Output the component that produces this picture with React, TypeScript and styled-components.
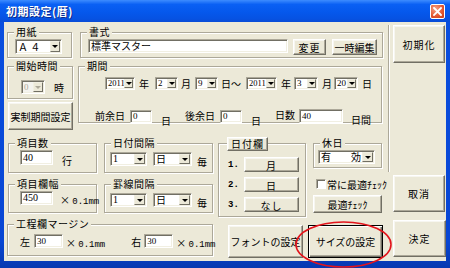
import React from "react";
import styled, { createGlobalStyle, css } from "styled-components";

const GlobalStyle = createGlobalStyle`
  html, body { margin: 0; padding: 0; background: #ffffff; }
  body {
    font-family: "Noto Sans CJK JP", "Noto Sans", sans-serif;
    font-size: 10px;
    color: #000;
  }
  *, *::before, *::after { box-sizing: border-box; }
`;

type Box = { $w?: number; $h?: number; $mt?: number; $ml?: number; $col?: string; $row?: string };

const boxCss = css<Box>`
  ${(p) => (p.$w !== undefined ? `width: ${p.$w}px;` : "")}
  ${(p) => (p.$h !== undefined ? `height: ${p.$h}px;` : "")}
  margin-top: ${(p) => p.$mt ?? 0}px;
  margin-left: ${(p) => p.$ml ?? 0}px;
  ${(p) => (p.$col ? `grid-column: ${p.$col};` : "")}
  ${(p) => (p.$row ? `grid-row: ${p.$row};` : "")}
  flex-shrink: 0;
`;

const Window = styled.div`
  position: relative;
  width: 450px;
  height: 268px;
  display: flex;
  flex-direction: column;
  background: linear-gradient(180deg, #0a4fe0 0%, #0846d4 90%, #0638b0 100%);
  overflow: hidden;
`;

const TitleBar = styled.div`
  height: 22px;
  flex-shrink: 0;
  display: flex;
  align-items: center;
  justify-content: space-between;
  padding: 0 5px 0 6px;
  background: linear-gradient(180deg, #3d8cff 0%, #0a60f4 20%, #0558ec 55%, #0652e2 85%, #0a4cd6 100%);
`;

const Title = styled.span`
  color: #fff;
  font-weight: bold;
  font-size: 11px;
  letter-spacing: 0.5px;
  text-shadow: 1px 1px 0 #0c2a8a;
`;

const CloseBtn = styled.div`
  width: 15px;
  height: 15px;
  border: 1px solid #fff;
  border-radius: 2px;
  background: radial-gradient(circle at 35% 30%, #f6a286, #e2552e 60%, #c63f1c);
  display: flex;
  align-items: center;
  justify-content: center;
`;

const Frame = styled.div`
  flex: 1;
  margin: 0 4px 7px 4px;
  background: #ece9d8;
  display: flex;
  padding: 3px 0 0 3px;
`;

const Main = styled.div`
  width: 376px;
  flex-shrink: 0;
  display: flex;
  flex-direction: column;
`;

const TopSection = styled.div`
  display: flex;
  height: 105px;
`;

const Column = styled.div<Box>`
  ${boxCss};
  display: flex;
  flex-direction: column;
`;

const BottomGrid = styled.div`
  margin-top: 7px;
  display: grid;
  grid-template-columns: 97px 114px 95px 70px;
  grid-template-rows: 36px 44px 44px;
`;

const Cell = styled.div<Box>`
  ${boxCss};
  display: flex;
  flex-direction: column;
  min-width: 0;
`;

const Group = styled.div<Box>`
  ${boxCss};
  align-self: start;
  border: 1px solid #aca899;
  box-shadow: inset 1px 1px 0 #fff, 1px 1px 0 #fff;
  display: flex;
  flex-direction: column;
`;

const Legend = styled.span`
  align-self: flex-start;
  height: 14px;
  line-height: 14px;
  margin: -8px 0 -6px 6px;
  padding: 0 2px;
  background: #ece9d8;
  letter-spacing: 0.5px;
  white-space: nowrap;
`;

const Row = styled.div<{ $pt?: number; $pl?: number }>`
  display: flex;
  align-items: flex-start;
  padding: ${(p) => p.$pt ?? 0}px 0 0 ${(p) => p.$pl ?? 0}px;
`;

const Txt = styled.span<Box & { $lh?: number }>`
  ${boxCss};
  line-height: ${(p) => p.$lh ?? 13}px;
  white-space: nowrap;
`;

const Field = styled.div<Box & { $disabled?: boolean }>`
  ${boxCss};
  display: flex;
  align-items: stretch;
  background: ${(p) => (p.$disabled ? "#f4f3ee" : "#fff")};
  border: 1px solid;
  border-color: #aca899 #fff #fff #aca899;
  box-shadow: inset 1px 1px 0 #716f64, inset -1px -1px 0 #f1efe2;
  padding: 1px 1px 1px 2px;
  color: ${(p) => (p.$disabled ? "#aca899" : "#000")};
`;

const Value = styled.span<{ $serif?: boolean; $fs?: number }>`
  flex: 1;
  min-width: 0;
  white-space: nowrap;
  display: flex;
  align-items: center;
  line-height: 1;
  font-family: ${(p) => (p.$serif ? `"Liberation Serif", serif` : "inherit")};
  font-size: ${(p) => p.$fs ?? 10}px;
`;

const Drop = styled.span<{ $w?: number; $disabled?: boolean }>`
  width: ${(p) => p.$w ?? 10}px;
  flex-shrink: 0;
  background: #ece9d8;
  border: 1px solid;
  border-color: #f1efe2 #716f64 #716f64 #f1efe2;
  display: flex;
  align-items: center;
  justify-content: center;
  &::after {
    content: "";
    border-left: 3px solid transparent;
    border-right: 3px solid transparent;
    border-top: 3px solid ${(p) => (p.$disabled ? "#aca899" : "#000")};
  }
`;

const Btn = styled.button<Box & { $default?: boolean; $ls?: number }>`
  ${boxCss};
  padding: 0;
  font-family: inherit;
  font-size: 10px;
  color: #000;
  letter-spacing: ${(p) => p.$ls ?? 1}px;
  background: #ece9d8;
  border: 1px solid;
  border-color: #fff #716f64 #716f64 #fff;
  box-shadow: inset -1px -1px 0 #aca899, inset 1px 1px 0 #f7f6f0;
  white-space: nowrap;
  overflow: visible;
  ${(p) =>
    p.$default &&
    css`
      border-color: #000;
      box-shadow: inset 1px 1px 0 #fff, inset -1px -1px 0 #716f64, inset -2px -2px 0 #aca899;
    `}
`;

const LegendBtn = styled(Btn)`
  align-self: flex-start;
  margin-top: -7px;
  margin-bottom: -7px;
  line-height: 12px;
`;

const DateList = styled.div`
  display: flex;
  flex-direction: column;
  gap: 5px;
  padding: 13px 0 0 9px;
`;

const DateRow = styled.div`
  display: flex;
  align-items: center;
`;

const Num = styled.span`
  width: 12px;
  font-family: "Liberation Mono", monospace;
  font-weight: bold;
  font-size: 9px;
`;

const CheckRow = styled.div`
  margin: 4px 0 0 3px;
  width: 74px;
  height: 14px;
  overflow: hidden;
  display: flex;
  align-items: center;
  white-space: nowrap;
`;

const CheckBox = styled.span`
  width: 10px;
  height: 10px;
  flex-shrink: 0;
  margin-right: 1px;
  background: #fff;
  border: 1px solid;
  border-color: #aca899 #fff #fff #aca899;
  box-shadow: inset 1px 1px 0 #716f64;
`;

const MmNum = styled.span`
  font-family: "Liberation Mono", monospace;
  font-size: 9px;
`;

const ButtonRow = styled.div<Box>`
  ${boxCss};
  display: flex;
`;

const RightCol = styled.div`
  width: 63px;
  flex-shrink: 0;
  display: flex;
  flex-direction: column;
`;

const SidePane = styled.div`
  margin-left: 5px;
  height: 147px;
  border-left: 1px solid #aca899;
  box-shadow: inset 1px 0 0 #fff;
  padding-left: 4px;
`;

const Annotation = styled.svg`
  position: absolute;
  left: 295px;
  top: 221px;
  overflow: visible;
  pointer-events: none;
`;

const Combo = ({
  w,
  h = 13,
  text,
  serif,
  fs,
  dw,
  disabled,
  ml,
}: {
  w: number;
  h?: number;
  text: string;
  serif?: boolean;
  fs?: number;
  dw?: number;
  disabled?: boolean;
  ml?: number;
}) => (
  <Field $w={w} $h={h} $ml={ml} $disabled={disabled}>
    <Value $serif={serif} $fs={fs}>{text}</Value>
    <Drop $w={dw} $disabled={disabled} />
  </Field>
);

const Mm = ({ ml, mt }: { ml: number; mt: number }) => (
  <Txt $ml={ml} $mt={mt}>
    × <MmNum>0.1mm</MmNum>
  </Txt>
);

export default function App() {
  return (
    <>
      <GlobalStyle />
      <Window>
        <TitleBar>
          <Title>初期設定(暦)</Title>
          <CloseBtn>
            <svg width="9" height="9" viewBox="0 0 9 9">
              <path d="M1 1 L8 8 M8 1 L1 8" stroke="#fff" strokeWidth="1.8" strokeLinecap="square" />
            </svg>
          </CloseBtn>
        </TitleBar>
        <Frame>
          <Main>
            <TopSection>
              <Column $w={66}>
                <Group $w={65} $h={26} $mt={7}>
                  <Legend>用紙</Legend>
                  <Row $pt={6} $pl={7}>
                    <Combo w={47} h={15} text="Ａ ４" />
                  </Row>
                </Group>
                <Group $w={66} $h={33} $mt={8}>
                  <Legend>開始時間</Legend>
                  <Row $pt={13} $pl={13}>
                    <Combo w={24} h={14} text="0" serif fs={9} disabled />
                    <Txt $ml={9} $mt={1}>時</Txt>
                  </Row>
                </Group>
                <Btn $w={65} $h={28} $mt={3} $ml={1} $ls={0}>実制期間設定</Btn>
              </Column>
              <Column $w={305} $ml={5}>
                <Group $w={303} $h={26} $mt={7} $ml={2}>
                  <Legend>書式</Legend>
                  <Row $pt={6} $pl={7}>
                    <Field $w={200} $h={14}>
                      <Value>標準マスター</Value>
                    </Field>
                    <Btn $w={33} $h={16} $ml={5}>変更</Btn>
                    <Btn $w={45} $h={16} $ml={6} $ls={0}>一時編集</Btn>
                  </Row>
                </Group>
                <Group $w={304} $h={57} $mt={8}>
                  <Legend>期間</Legend>
                  <Row $pt={10} $pl={26}>
                    <Combo w={30} text="2011" serif fs={8.5} dw={9} />
                    <Txt $ml={4}>年</Txt>
                    <Combo w={23} text="2" serif fs={9} dw={9} ml={6} />
                    <Txt $ml={3}>月</Txt>
                    <Combo w={23} text="9" serif fs={9} dw={9} ml={4} />
                    <Txt $ml={3}>日～</Txt>
                    <Combo w={31} text="2011" serif fs={8.5} dw={9} ml={5} />
                    <Txt $ml={4}>年</Txt>
                    <Combo w={24} text="3" serif fs={9} dw={9} ml={3} />
                    <Txt $ml={4}>月</Txt>
                    <Combo w={24} text="20" serif fs={9} dw={9} ml={2} />
                    <Txt $ml={4}>日</Txt>
                  </Row>
                  <Row $pt={20} $pl={16}>
                    <Txt $mt={-1}>前余日</Txt>
                    <Field $w={22} $h={13} $ml={5}>
                      <Value $serif $fs={9}>0</Value>
                    </Field>
                    <Txt $ml={9} $mt={4}>日</Txt>
                    <Txt $ml={14} $mt={-1}>後余日</Txt>
                    <Field $w={22} $h={13} $ml={5}>
                      <Value $serif $fs={9}>0</Value>
                    </Field>
                    <Txt $ml={9} $mt={4}>日</Txt>
                    <Txt $ml={14} $mt={-2}>日数</Txt>
                    <Field $w={44} $h={14} $ml={4} $mt={-1}>
                      <Value $serif $fs={9}>40</Value>
                    </Field>
                    <Txt $ml={8} $mt={3}>日間</Txt>
                  </Row>
                </Group>
              </Column>
            </TopSection>
            <BottomGrid>
              <Group $col="1" $row="1" $w={89} $h={30} $mt={6} $ml={1}>
                <Legend>項目数</Legend>
                <Row $pt={6} $pl={11}>
                  <Field $w={33} $h={15}>
                    <Value $serif>40</Value>
                  </Field>
                  <Txt $ml={9} $mt={4}>行</Txt>
                </Row>
              </Group>
              <Group $col="2" $row="1" $w={109} $h={30} $mt={6}>
                <Legend>日付間隔</Legend>
                <Row $pt={8} $pl={5}>
                  <Combo w={37} h={14} text="1" serif dw={11} />
                  <Combo w={39} h={14} text="日" dw={11} ml={6} />
                  <Txt $ml={5} $mt={3}>毎</Txt>
                </Row>
              </Group>
              <Group $col="1" $row="2" $w={89} $h={29} $mt={11} $ml={1}>
                <Legend>項目欄幅</Legend>
                <Row $pt={6} $pl={11}>
                  <Field $w={33} $h={14}>
                    <Value $serif>450</Value>
                  </Field>
                  <Mm ml={7} mt={2} />
                </Row>
              </Group>
              <Group $col="2" $row="2" $w={109} $h={29} $mt={11}>
                <Legend>罫線間隔</Legend>
                <Row $pt={8} $pl={5}>
                  <Combo w={37} h={14} text="1" serif dw={11} />
                  <Combo w={39} h={14} text="日" dw={11} ml={6} />
                  <Txt $ml={5} $mt={3}>毎</Txt>
                </Row>
              </Group>
              <Group $col="3" $row="1 / span 2" $w={88} $h={74} $mt={6}>
                <LegendBtn $w={41} $h={14} $ml={8}>日付欄</LegendBtn>
                <DateList>
                  {[
                    ["1.", "月"],
                    ["2.", "日"],
                    ["3.", "なし"],
                  ].map(([n, label]) => (
                    <DateRow key={n}>
                      <Num>{n}</Num>
                      <Btn $w={55} $h={15} $ml={4}>{label}</Btn>
                    </DateRow>
                  ))}
                </DateList>
              </Group>
              <Group $col="4" $row="1" $w={69} $h={25} $mt={6}>
                <Legend>休日</Legend>
                <Row $pt={6} $pl={4}>
                  <Combo w={57} h={14} text="有　　効" dw={11} />
                </Row>
              </Group>
              <Cell $col="4" $row="2">
                <CheckRow>
                  <CheckBox />
                  常に最適ﾁｪｯｸ
                </CheckRow>
                <Btn $w={69} $h={18} $mt={4} $ls={0}>最適ﾁｪｯｸ</Btn>
              </Cell>
              <Group $col="1 / span 2" $row="3" $w={206} $h={32} $mt={7}>
                <Legend>工程欄マージン</Legend>
                <Row $pt={9} $pl={12}>
                  <Txt $mt={1}>左</Txt>
                  <Field $w={29} $h={14} $ml={4}>
                    <Value $serif $fs={9}>30</Value>
                  </Field>
                  <Mm ml={3} mt={2} />
                  <Txt $ml={26} $mt={1}>右</Txt>
                  <Field $w={29} $h={14} $ml={3}>
                    <Value $serif $fs={9}>30</Value>
                  </Field>
                  <Mm ml={3} mt={2} />
                </Row>
              </Group>
              <ButtonRow $col="3 / span 2" $row="3" $mt={8} $ml={10}>
                <Btn $w={75} $h={33} $ls={0}>フォントの設定</Btn>
                <Btn $w={75} $h={33} $ml={5} $ls={0} $default>サイズの設定</Btn>
              </ButtonRow>
            </BottomGrid>
          </Main>
          <RightCol>
            <SidePane>
              <Btn $w={52} $h={38}>初期化</Btn>
            </SidePane>
            <Btn $w={52} $h={37} $mt={3} $ml={10}>取消</Btn>
            <Btn $w={53} $h={37} $mt={8} $ml={10}>決定</Btn>
          </RightCol>
        </Frame>
        <Annotation width="97" height="47" viewBox="0 0 97 47">
          <ellipse cx="48.5" cy="23.5" rx="47.5" ry="22.5" fill="none" stroke="#e3141c" strokeWidth="1.6" />
        </Annotation>
      </Window>
    </>
  );
}
